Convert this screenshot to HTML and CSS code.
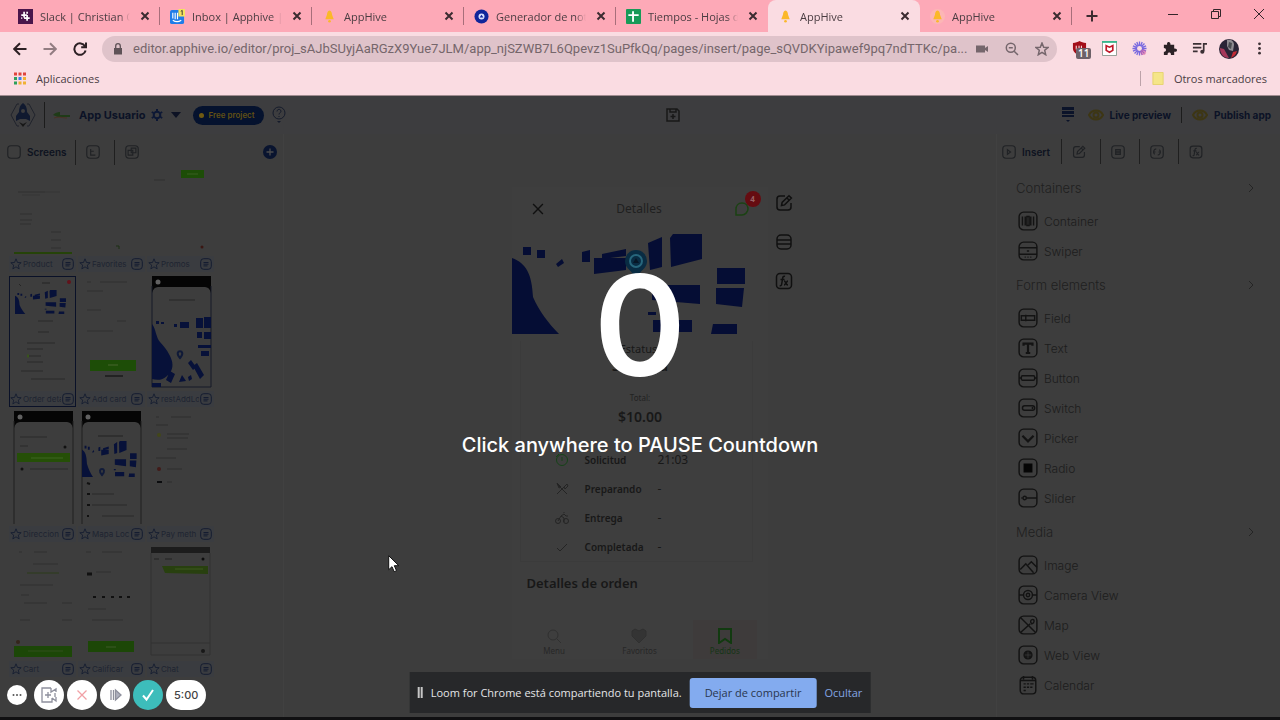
FILE: index.html
```html
<!DOCTYPE html>
<html lang="es">
<head>
  <meta charset="UTF-8">
  <title>AppHive</title>
  <link rel="stylesheet" href="styles.css">
</head>
<body>
  <!-- shared icons -->
  <svg class="sprite" aria-hidden="true">
    <symbol id="close" viewBox="0 0 10 10"><path d="M1.5 1.5l7 7M8.5 1.5l-7 7"/></symbol>
    <symbol id="star" viewBox="0 0 14 14"><path d="M7 1l1.7 4.2 4.3.3-3.300 2.800 1 4.400L7 10.300 3.300 12.700l1-4.400L1 5.500l4.300-.3z"/></symbol>
    <symbol id="menu" viewBox="0 0 12 12"><rect x=".7" y=".7" width="10.600" height="10.600" rx="3"/><path d="M3.500 4.500h5M3.500 6.200h5M3.500 7.900h4"/></symbol>
    <symbol id="chevron" viewBox="0 0 10 10"><path d="M3 1l4 4-4 4"/></symbol>
    <symbol id="bell" viewBox="0 0 16 16"><path d="M8 1.500c-2 0-2.500 2.500-2.700 4.500L3.500 11h9l-1.800-5C10.500 4 10 1.500 8 1.500z" fill="#fbb829" stroke="none"/><circle cx="8" cy="13" r="1.400" fill="#fbb829" stroke="none"/></symbol>
    <symbol id="edit" viewBox="0 0 18 18"><path d="M10 2H5a3 3 0 0 0-3 3v8a3 3 0 0 0 3 3h8a3 3 0 0 0 3-3V9M6.500 11.500l.6-3L14 1.800l2.400 2.300-6.800 6.800zM12 4l2.200 2.200"/></symbol>
    <symbol id="fx" viewBox="0 0 18 18"><rect x="1.500" y="1.500" width="15" height="15" rx="3.500"/><path d="M10 4.500c-1.500-.8-2.200.5-2.400 2L6.700 12c-.2 1.400-.8 2-2 1.500M5.500 7.500h4M9 9c2 0 1.500 4 4 4M13 9c-1.500 0-2.500 4-4 4"/></symbol>
    <symbol id="eye" viewBox="0 0 16 12"><path d="M1 6c3-6 11-6 14 0-3 6-11 6-14 0z"/><circle cx="8" cy="6" r="2.500"/></symbol>
    <symbol id="box" viewBox="0 0 18 18"><rect x="1" y="1" width="16" height="16" rx="4"/></symbol>
    <symbol id="city" viewBox="0 0 256 100" preserveAspectRatio="none">
      <path d="M0 24c14 5 20 16 21 39 6 14 16 27 26 37H0zM11 13h8v8h-8zM25 16h8v8h-8zM44 30l6-5 2 4-6 4zM70 18l8-2v12h-8zM82 24h32v12l-32 4zM90 20l24-5v7l-24 3zM136 9l14-6v30l-12 3zM158 4l3-4h29v25l-31 8zM205 34h28v16h-28zM204 54h28l-2 19-26-3zM140 51h48v19l-48-4zM141 86h39v12h-39zM201 90h24v10h-26zM136 78h8v3h-8z"/>
    </symbol>
  </svg>

  <header class="browser">
    <div class="tabs">
      <div class="tab">
        <svg class="favicon" viewBox="0 0 16 16"><rect width="16" height="16" fill="#4a154b"/><path d="M6.500 3v6M9.700 6.500v6M3.500 6.500h6M6.500 9.700h6M9.700 3v2M3.500 9.700h1" stroke="#fff" stroke-width="1.800"/></svg>
        <span class="tab-title">Slack | Christian Co</span>
        <button class="tab-close" aria-label="Cerrar"><svg><use href="#close"/></svg></button>
      </div>
      <div class="tab">
        <svg class="favicon" viewBox="0 0 16 16"><rect y="1" width="15" height="15" rx="2" fill="#1f7ce8"/><path d="M3 4v6M5.500 4v7M8 4v7M3 12c3 2 6 2 9 0" stroke="#fff" stroke-width="1.200" fill="none"/><rect x="9" width="7" height="8" fill="#f5e35f"/><path d="M11.500 2.500l1.500-1v5" stroke="#333" fill="none"/></svg>
        <span class="tab-title">Inbox | Apphive | In</span>
        <button class="tab-close" aria-label="Cerrar"><svg><use href="#close"/></svg></button>
      </div>
      <div class="tab">
        <svg class="favicon"><use href="#bell"/></svg>
        <span class="tab-title">AppHive</span>
        <button class="tab-close" aria-label="Cerrar"><svg><use href="#close"/></svg></button>
      </div>
      <div class="tab">
        <svg class="favicon" viewBox="0 0 16 16"><circle cx="8" cy="8" r="7.500" fill="#10259a"/><circle cx="8" cy="8" r="3.200" fill="#d9e2ff"/><path d="M6 9l2-3 2 3z" fill="#10259a"/></svg>
        <span class="tab-title">Generador de not</span>
        <button class="tab-close" aria-label="Cerrar"><svg><use href="#close"/></svg></button>
      </div>
      <div class="tab before-active">
        <svg class="favicon" viewBox="0 0 16 16"><rect width="16" height="16" rx="1" fill="#189a58"/><path d="M7.500 2.500v11M2.500 6.500h11" stroke="#fff" stroke-width="2"/></svg>
        <span class="tab-title">Tiempos - Hojas d</span>
        <button class="tab-close" aria-label="Cerrar"><svg><use href="#close"/></svg></button>
      </div>
      <div class="tab active">
        <svg class="favicon"><use href="#bell"/></svg>
        <span class="tab-title">AppHive</span>
        <button class="tab-close" aria-label="Cerrar"><svg><use href="#close"/></svg></button>
      </div>
      <div class="tab">
        <svg class="favicon glow"><use href="#bell"/></svg>
        <span class="tab-title">AppHive</span>
        <button class="tab-close" aria-label="Cerrar"><svg><use href="#close"/></svg></button>
      </div>
      <button class="new-tab" aria-label="Nueva pestaña"><svg viewBox="0 0 12 12"><path d="M6 .5v11M.5 6h11"/></svg></button>
      <div class="window-buttons">
        <button aria-label="Minimizar"><svg viewBox="0 0 10 10"><path d="M0 5.500h10"/></svg></button>
        <button aria-label="Restaurar"><svg viewBox="0 0 10 10"><path d="M.5 2.500h7v7h-7zM2.500 2.500v-2h7v7h-2"/></svg></button>
        <button aria-label="Cerrar ventana"><svg viewBox="0 0 10 10"><path d="M0 0l10 10M10 0L0 10"/></svg></button>
      </div>
    </div>

    <div class="toolbar">
      <div class="nav-buttons">
        <button aria-label="Atrás"><svg viewBox="0 0 14 14"><path d="M13.500 7H1.500M7 1.200L1.200 7 7 12.800"/></svg></button>
        <button class="disabled" aria-label="Adelante"><svg viewBox="0 0 14 14"><path d="M.5 7h12M7 1.200L12.800 7 7 12.800"/></svg></button>
        <button aria-label="Recargar"><svg viewBox="0 0 14 14"><path d="M12 4.200A5.700 5.700 0 1 0 12.600 8.500M13 .5v4.800H8.200"/></svg></button>
      </div>
      <div class="address">
        <svg class="lock" viewBox="0 0 10 12"><path d="M1 5h8v6.500H1z" fill="#5e5257"/><path d="M2.700 5V3a2.300 2.300 0 0 1 4.600 0v2" fill="none" stroke="#5e5257" stroke-width="1.300"/></svg>
        <input class="url" type="text" aria-label="Dirección" value="editor.apphive.io/editor/proj_sAJbSUyjAaRGzX9Yue7JLM/app_njSZWB7L6Qpevz1SuPfkQq/pages/insert/page_sQVDKYipawef9pq7ndTTKc/pa...">
        <svg class="small" viewBox="0 0 14 14"><path d="M1 3.500h9v7H1zM10 6l3-2v6l-3-2z" fill="#75666c" stroke="none"/></svg>
        <svg class="small" viewBox="0 0 14 14"><circle cx="5.800" cy="5.800" r="4.500"/><path d="M9.200 9.200L13 13M3.800 5.800h4"/></svg>
        <svg class="small" viewBox="0 0 14 14"><use href="#star"/></svg>
      </div>
      <div class="extensions">
        <button class="ublock" aria-label="uBlock">
          <svg viewBox="0 0 14 16"><path d="M0 2c3 0 5-1 7-2 2 1 4 2 7 2v6c0 4-4 6-7 8-3-2-7-4-7-8z" fill="#a30d18"/><path d="M3.500 5v4h3V5M9 5v4h2" stroke="#fff" fill="none"/></svg>
          <span class="count">11</span>
        </button>
        <button aria-label="McAfee"><svg viewBox="0 0 16 16"><path d="M.5.5h15v15H.5z" fill="#fff" stroke="#8d9a91"/><path d="M0 0h16v2H0z" fill="#38b58c"/><path d="M4.500 5l3.500 1.600L11.500 5v5L8 12 4.500 10z" fill="none" stroke="#c01829" stroke-width="1.800"/></svg></button>
        <button aria-label="Loom"><svg viewBox="0 0 16 16"><path d="M8 .5v15M.5 8h15M2.700 2.700l10.600 10.600M13.300 2.700L2.700 13.300M5.100 1l5.800 14M1 5.100l14 5.800M1 10.900l14-5.800M5.100 15L10.900 1" stroke="#7768df" stroke-width="1.400"/><circle cx="8" cy="8" r="2.600" fill="#fadce2"/><circle cx="12" cy="12" r="3" fill="#df5c97" opacity=".5"/></svg></button>
        <button aria-label="Extensiones"><svg viewBox="0 0 16 16"><path d="M2 4h3.500c-1-4 4-4 3.500 0h4v4c4-.5 4 4 0 3.500V15H9.500c.5-3.500-4-3.500-3.500 0H2v-3.500c3 0 3-4 0-4z" fill="#2b2226"/></svg></button>
        <button aria-label="Multimedia"><svg viewBox="0 0 16 16"><path d="M1 3h9M1 7h9M1 11h5" stroke="#3b3034" stroke-width="1.800"/><path d="M12.500 11V3H16" stroke="#3b3034" stroke-width="1.800" fill="none"/><circle cx="11" cy="11.500" r="2.200" fill="#3b3034"/></svg></button>
        <button class="avatar" aria-label="Perfil"><svg viewBox="0 0 20 20"><circle cx="10" cy="10" r="10" fill="#2a2436"/><path d="M8 1c4-1 7 1 7 5l-1 6-4-1-2-4z" fill="#8d8a90"/><path d="M10 3l3 1-1 6-3-2z" fill="#484b50"/><path d="M1 9l4 1 5 9c-6 0-9-5-9-10z" fill="#a5385a"/><path d="M14 13l4-1c-1 4-4 6-6 7z" fill="#c22b35"/></svg></button>
        <button aria-label="Menú"><svg viewBox="0 0 16 16" fill="#3b3034"><circle cx="8" cy="3" r="1.500"/><circle cx="8" cy="8" r="1.500"/><circle cx="8" cy="13" r="1.500"/></svg></button>
      </div>
    </div>

    <div class="bookmarks">
      <a href="#"><svg viewBox="0 0 12 12"><path d="M0 0h3v3H0zM4.500 0h3v3h-3zM9 0h3v3H9z" fill="#e0433b"/><path d="M0 4.500h3v3H0z" fill="#2da05a"/><path d="M4.500 4.500h3v3h-3z" fill="#3880e8"/><path d="M9 4.500h3v3H9zM4.500 9h3v3h-3zM9 9h3v3H9z" fill="#f0b132"/><path d="M0 9h3v3H0z" fill="#2da05a"/></svg>Aplicaciones</a>
      <a class="other" href="#"><svg viewBox="0 0 12 14"><path d="M.5.5h11v13H.5z" fill="#f5e588" stroke="#e5d36c"/></svg>Otros marcadores</a>
    </div>
  </header>

  <div class="app">
    <div class="app-bar">
      <div class="project">
        <svg class="logo" viewBox="0 0 26 26"><path d="M9 2H7L1 13l6 11h2M17 2h2l6 11-6 11h-2" fill="none" stroke="#20232c" stroke-width="1"/><path d="M13 1c3 2 4 5 4 9l3 4v5l-4-2h-6l-4 2v-5l3-4c0-4 1-7 4-9z" fill="#10192f"/><circle cx="13" cy="9" r="2" fill="#3d3d3e"/><path d="M9 20l4 2 4-2-4 5z" fill="#171717"/></svg>
        <span class="divider"></span>
        <svg class="brand" viewBox="0 0 18 10"><path d="M0 5c3-3 6-3 7-3v3h10v2H5z" fill="#1f3b18"/><path d="M1 8c6-2 8 0 13 0" stroke="#4a3122" fill="none"/></svg>
        <strong class="project-name">App Usuario</strong>
        <svg class="gear" viewBox="0 0 12 12"><circle cx="6" cy="6" r="3.300" fill="none" stroke="#0d1835" stroke-width="2"/><path d="M6 0v2M6 10v2M.8 3l1.800 1M9.400 8l1.800 1M.8 9l1.800-1M9.400 4l1.800-1" stroke="#0d1835" stroke-width="2"/></svg>
        <svg class="caret" viewBox="0 0 10 6"><path d="M0 0h10L5 6z" fill="#0d1224"/></svg>
        <span class="plan"><i></i>Free project</span>
        <svg class="help" viewBox="0 0 14 18"><circle cx="7" cy="7" r="6" fill="none" stroke="#151b2b"/><path d="M5 5.500c0-3 4-2.500 4-.3C9 7 7 6.500 7 8.500M7 10v1" fill="none" stroke="#151b2b"/><path d="M5 15h4l-2 2z" fill="#151b2b"/></svg>
      </div>
      <button class="save" aria-label="Guardar"><svg viewBox="0 0 14 14"><path d="M1 1h10l2 2v10H1zM4 1v3h6V1M7 6v5M4.500 8.500h5"/></svg></button>
      <div class="publish">
        <svg class="layers" viewBox="0 0 14 18"><path d="M1 1h12v3H1zM1 5h12v3H1zM1 9h12v2H1z" fill="#0b1329"/><path d="M5 14h4l-2 2z" fill="#0b1329"/></svg>
        <button class="bar-button"><svg><use href="#eye"/></svg>Live preview</button>
        <span class="divider short"></span>
        <button class="bar-button"><svg><use href="#eye"/></svg>Publish app</button>
      </div>
    </div>

    <div class="workspace">
      <aside class="screens-panel">
        <div class="panel-tabs">
          <button class="panel-tab current"><svg><use href="#box"/></svg>Screens</button>
          <button class="panel-tab" aria-label="Árbol"><svg viewBox="0 0 18 18"><use href="#box"/><path d="M6 5v8h6M6 8h4"/></svg></button>
          <button class="panel-tab" aria-label="Componentes"><svg viewBox="0 0 18 18"><use href="#box"/><path d="M4 7h6v6H4zM8 4h6v6H8z"/></svg></button>
          <button class="add" aria-label="Agregar"><svg viewBox="0 0 14 14"><circle cx="7" cy="7" r="7" fill="#09142f"/><path d="M7 3.500v7M3.500 7h7" stroke="#4b4b4c" stroke-width="1.300"/></svg></button>
        </div>
        <div class="screens">
          <div class="screen">
            <svg class="thumb" viewBox="0 0 67 85"><path d="M9 22h27M11 44h12M11 50h12M11 54h11M42 62h10M42 70h10M42 78h10" stroke="#303030"/><path d="M5 83h58" stroke="#254309" stroke-width="2"/><path d="M36 22h15M13 25h18" stroke="#363636"/></svg>
            <div class="screen-name"><svg><use href="#star"/></svg><span>Product</span><svg><use href="#menu"/></svg></div>
          </div>
          <div class="screen">
            <svg class="thumb" viewBox="0 0 67 85"><path d="M38 76h3v3" stroke="#1c3015" fill="none"/></svg>
            <div class="screen-name"><svg><use href="#star"/></svg><span>Favorites</span><svg><use href="#menu"/></svg></div>
          </div>
          <div class="screen">
            <svg class="thumb" viewBox="0 0 67 85"><path d="M34 0h23v8H34z" fill="#1d4d07"/><path d="M40 4h11" stroke="#3a6123"/><path d="M7 10h11" stroke="#303030"/><circle cx="55" cy="77" r="1.500" fill="#3a1612"/></svg>
            <div class="screen-name"><svg><use href="#star"/></svg><span>Promos</span><svg><use href="#menu"/></svg></div>
          </div>
          <div class="screen selected">
            <svg class="thumb" viewBox="0 0 67 114"><path d="M10 8l2 2M33 7h8" stroke="#252525"/><circle cx="60" cy="6" r="2" fill="#63121b"/><svg x="6" y="14" width="56" height="24" fill="#071139"><use href="#city"/></svg><path d="M29 45h15M29 56h11M18 67h28M18 73h16M18 80h14M18 86h16M12 95h22M22 103h34" stroke="#2b2b2b"/><path d="M18 80h2" stroke="#39541d" stroke-width="3"/></svg>
            <div class="screen-name"><svg><use href="#star"/></svg><span>Order deta</span><svg><use href="#menu"/></svg></div>
          </div>
          <div class="screen">
            <svg class="thumb" viewBox="0 0 67 114"><path d="M9 6h4M22 6h27M9 15h16M9 34h14M39 45h9M9 55h26" stroke="#313131"/><path d="M12 84h46v11H12z" fill="#1d4d07"/><path d="M30 89h10" stroke="#48662f"/><path d="M27 100h18" stroke="#222" stroke-width="2"/></svg>
            <div class="screen-name"><svg><use href="#star"/></svg><span>Add card</span><svg><use href="#menu"/></svg></div>
          </div>
          <div class="screen">
            <svg class="thumb" viewBox="0 0 67 114"><path d="M5 0h59v17c-1-4-3-6-6-6H11c-3 0-5 2-6 6z" fill="#050505"/><path d="M5 10v101h59V10" fill="none" stroke="#171b29"/><circle cx="11" cy="6" r="2.500" fill="#616161"/><path d="M22 24h26" stroke="#272727"/><path d="M5 48c4 5 4 14 8 18 11 12 18 25 7 34-5 5-11 4-15 3zM9 45h3v3H9zM14 46h3v2h-3zM27 48h3v3h-3zM33 46h9v6h-9zM49 42h7v10h-7zM57 41h7v11h-7zM50 56h5v6h-5zM57 56h7v7h-7zM51 69h13v3H51zM54 75h8v5h-8zM5 107h9v4H5zM23 95l5 3-4 9-5-3zM32 106l3-7 4 6zM41 87l3-3 5 7-3 3zM46 90l4-3 7 12-4 4zM41 101l3-2 1 4-3 2z" fill="#071139"/><path d="M33 82c-8-9 8-9 0 0z" fill="none" stroke="#101a38" stroke-width="2"/></svg>
            <div class="screen-name"><svg><use href="#star"/></svg><span>restAddLo</span><svg><use href="#menu"/></svg></div>
          </div>
          <div class="screen">
            <svg class="thumb" viewBox="0 0 67 114"><path d="M5 0h59v17c-1-4-3-6-6-6H11c-3 0-5 2-6 6z" fill="#050505"/><path d="M5 10v103M64 10v103" fill="none" stroke="#202020"/><circle cx="11" cy="6" r="2.500" fill="#616161"/><path d="M11 26h27M11 35h8M21 58h38" stroke="#2a2a2a"/><path d="M8 42h53v9H8z" fill="#254f07"/><path d="M22 47h32" stroke="#3f6622"/><circle cx="13" cy="58" r="1.500" fill="#111"/><circle cx="56" cy="36" r="1.500" fill="#111"/></svg>
            <div class="screen-name"><svg><use href="#star"/></svg><span>Direccion</span><svg><use href="#menu"/></svg></div>
          </div>
          <div class="screen">
            <svg class="thumb" viewBox="0 0 67 114"><path d="M4 0h59v17c-1-4-3-6-6-6H10c-3 0-5 2-6 6z" fill="#050505"/><path d="M4 10v103M63 10v103" fill="none" stroke="#202020"/><circle cx="10" cy="6" r="2.500" fill="#616161"/><path d="M20 25h25" stroke="#222"/><svg x="4" y="30" width="60" height="36" fill="#071139"><use href="#city"/></svg><path d="M24 64c-7-8 7-8 0 0z" fill="none" stroke="#111b39" stroke-width="2"/><path d="M14 83h22M14 94h35M24 105h32" stroke="#2b2b2b"/><path d="M9 72l3 1M9 83h3M9 94h3M9 105h2" stroke="#111" stroke-width="2"/></svg>
            <div class="screen-name"><svg><use href="#star"/></svg><span>Mapa Loc</span><svg><use href="#menu"/></svg></div>
          </div>
          <div class="screen">
            <svg class="thumb" viewBox="0 0 67 114"><path d="M9 6h3M24 6h20M9 14h12M20 23h22M20 27h21M20 38h20M9 47h20M20 58h15M20 71h5" stroke="#2e2e2e"/><circle cx="12" cy="24" r="2" fill="#434719"/><circle cx="12" cy="58" r="2" fill="#421a18"/><path d="M10 71h5" stroke="#0b0c0e" stroke-width="2"/></svg>
            <div class="screen-name"><svg><use href="#star"/></svg><span>Pay meth</span><svg><use href="#menu"/></svg></div>
          </div>
          <div class="screen">
            <svg class="thumb" viewBox="0 0 67 114"><path d="M10 6h3M25 6h13M24 18h25M11 39h33M12 49h8M15 57h23M53 57h10M11 74h10M53 74h10" stroke="#303030"/><path d="M18 27h32" stroke="#2c3d1a"/><path d="M5 100h58v11H5z" fill="#1c4707"/><path d="M19 105h35" stroke="#31501c"/><circle cx="9" cy="96" r="2" fill="#35251b"/></svg>
            <div class="screen-name"><svg><use href="#star"/></svg><span>Cart</span><svg><use href="#menu"/></svg></div>
          </div>
          <div class="screen">
            <svg class="thumb" viewBox="0 0 67 114"><path d="M8 6h5M24 6h20M18 26h15M10 63h18M14 74h31" stroke="#303030"/><path d="M9 28h5" stroke="#111" stroke-width="3"/><path d="M15 51h3M24 51h3M33 51h3M41 51h3M49 51h3" stroke="#101010" stroke-width="2"/><path d="M10 95h46v11H10z" fill="#1c4707"/><path d="M28 101h10" stroke="#3d5b28"/></svg>
            <div class="screen-name"><svg><use href="#star"/></svg><span>Calificar</span><svg><use href="#menu"/></svg></div>
          </div>
          <div class="screen">
            <svg class="thumb" viewBox="0 0 67 114"><path d="M4 1h59v6H4z" fill="#1c1c1c"/><path d="M4 7v102h59V7M4 97h59" fill="none" stroke="#333"/><path d="M7 13h5M18 13h7" stroke="#222"/><path d="M15 20h46v8l-43-1z" fill="#28400f"/><path d="M28 23h28" stroke="#3c5821"/><circle cx="56" cy="13" r="1.500" fill="#0c0c0c"/><circle cx="56" cy="105" r="2" fill="#181818"/></svg>
            <div class="screen-name"><svg><use href="#star"/></svg><span>Chat</span><svg><use href="#menu"/></svg></div>
          </div>
        </div>
      </aside>

      <main class="canvas">
        <div class="phone">
          <div class="phone-header">
            <svg class="phone-close"><use href="#close"/></svg>
            <span>Detalles</span>
            <div class="chat">
              <svg viewBox="0 0 16 16"><path d="M2 14V8c0-3 2-6 6-6s6 3 6 6-3 6-6 6z" fill="none" stroke="#1b4213" stroke-width="1.500"/></svg>
              <b>4</b>
            </div>
          </div>
          <svg class="map" viewBox="0 0 256 100"><use href="#city" fill="#050d34"/><circle cx="124" cy="27" r="11" fill="#092c43"/><path d="M117 35l7 9 7-9z" fill="#092c43"/><circle cx="124" cy="27" r="6" fill="none" stroke="#27667c" stroke-width="2"/><path d="M121 29l3-5 3 5z" fill="#071626"/></svg>
          <div class="order">
            <p class="order-label">Estatus:</p>
            <p class="order-status">Solicitud</p>
            <p class="order-total-label">Total:</p>
            <p class="order-total">$10.00</p>
            <ul class="steps">
              <li><svg viewBox="0 0 14 14"><circle cx="7" cy="7" r="5.500" stroke="#164218"/><path d="M7 4v4M4 1L1 4" stroke="#164218"/></svg><b>Solicitud</b><span class="time">21:03</span></li>
              <li><svg viewBox="0 0 14 14"><path d="M2 2l10 10M2 12l7-7M9 5l3-3 1 2-3 3zM2 1l4 4-2 1z"/></svg><b>Preparando</b><span>-</span></li>
              <li><svg viewBox="0 0 14 14"><circle cx="3" cy="10" r="2.500"/><circle cx="11" cy="10" r="2.500"/><path d="M3 10l3-5 3 2v4M6 5l3-2 2 2h2M9 1v1"/></svg><b>Entrega</b><span>-</span></li>
              <li><svg viewBox="0 0 14 14"><path d="M2 8l3 3 7-7"/></svg><b>Completada</b><span>-</span></li>
            </ul>
          </div>
          <h2 class="order-title">Detalles de orden</h2>
          <nav class="phone-nav">
            <a href="#"><svg viewBox="0 0 16 16"><circle cx="7" cy="7" r="5"/><path d="M11 11l4 4"/></svg>Menu</a>
            <a href="#"><svg viewBox="0 0 16 16"><path d="M8 15L1 8V3l3-2 4 2 4-2 3 2v5z" fill="#343434"/></svg>Favoritos</a>
            <a href="#"><span class="on"><svg viewBox="0 0 16 16"><path d="M2 1h12v14l-6-4-6 4z"/></svg>Pedidos</span></a>
          </nav>
        </div>
        <div class="phone-tools">
          <button aria-label="Editar"><svg><use href="#edit"/></svg></button>
          <button aria-label="Datos"><svg viewBox="0 0 18 18"><rect x="2" y="2" width="14" height="14" rx="4"/><path d="M2 7h14M2 11h14"/></svg></button>
          <button aria-label="Funciones"><svg><use href="#fx"/></svg></button>
        </div>
      </main>

      <aside class="insert-panel">
        <div class="panel-tabs">
          <button class="panel-tab current"><svg viewBox="0 0 18 18"><use href="#box"/><path d="M7 6l4 3-4 3z"/></svg>Insert</button>
          <button class="panel-tab" aria-label="Editar"><svg><use href="#edit"/></svg></button>
          <button class="panel-tab" aria-label="Estilo"><svg viewBox="0 0 18 18"><use href="#box"/><path d="M6 6h6v6H6zM6 8h6M6 10h6"/></svg></button>
          <button class="panel-tab" aria-label="Eventos"><svg viewBox="0 0 18 18"><use href="#box"/><path d="M8 5a4 4 0 0 0-2 7M10 13a4 4 0 0 0 2-7M5 9h2M11 9h3"/></svg></button>
          <button class="panel-tab" aria-label="Funciones"><svg><use href="#fx"/></svg></button>
        </div>
        <section>
          <h3>Containers<svg><use href="#chevron"/></svg></h3>
          <ul class="elements">
            <li><svg viewBox="0 0 18 18"><use href="#box"/><path d="M4 5v8M14 5v8M6.500 5v8M11.500 5v8M8 5h2v8H8z"/></svg>Container</li>
            <li><svg viewBox="0 0 18 18"><use href="#box"/><path d="M1 6h16M1 12h16M8 9h2M6 14.500h1M8.500 14.500h1M11 14.500h1"/></svg>Swiper</li>
          </ul>
        </section>
        <section>
          <h3>Form elements<svg><use href="#chevron"/></svg></h3>
          <ul class="elements">
            <li><svg viewBox="0 0 18 18"><use href="#box"/><path d="M3 7h12v4H3zM7 6v6"/></svg>Field</li>
            <li><svg viewBox="0 0 18 18"><use href="#box"/><path d="M5 7V5h8v2M9 5v8M7 13.500h4" stroke-width="2"/></svg>Text</li>
            <li><svg viewBox="0 0 18 18"><use href="#box"/><rect x="3" y="7" width="12" height="4" rx="1"/><path d="M1 9h2M15 9h2"/></svg>Button</li>
            <li><svg viewBox="0 0 18 18"><use href="#box"/><rect x="4" y="7" width="11" height="4" rx="2"/><path d="M13 8v2"/></svg>Switch</li>
            <li><svg viewBox="0 0 18 18"><use href="#box"/><path d="M4 7l5 5 5-5" stroke-width="2"/></svg>Picker</li>
            <li><svg viewBox="0 0 18 18"><use href="#box"/><path d="M6 6h6v6H6z" fill="#060606" stroke="#060606" stroke-width="2"/></svg>Radio</li>
            <li><svg viewBox="0 0 18 18"><use href="#box"/><circle cx="6" cy="9" r="1.500"/><path d="M7.500 9H17M3 9h1"/></svg>Slider</li>
          </ul>
        </section>
        <section>
          <h3>Media<svg><use href="#chevron"/></svg></h3>
          <ul class="elements">
            <li><svg viewBox="0 0 18 18"><use href="#box"/><path d="M2 13l5-5 7 8M9 9l3-3 5 5"/></svg>Image</li>
            <li><svg viewBox="0 0 18 18"><use href="#box"/><circle cx="9" cy="9" r="4"/><circle cx="9" cy="9" r="1.500"/><path d="M1 9h4M13 9h4"/></svg>Camera View</li>
            <li><svg viewBox="0 0 18 18"><use href="#box"/><path d="M2 2l14 14M2 16l9-8M12.500 8c-4-4 4-6 1.500-1z"/></svg>Map</li>
            <li><svg viewBox="0 0 18 18"><use href="#box"/><circle cx="9" cy="9" r="3.500" fill="#171717"/><path d="M6 9h6M9 6v6" stroke="#444" stroke-width=".5"/></svg>Web View</li>
            <li><svg viewBox="0 0 18 18"><rect x="2" y="2" width="14" height="15" rx="3"/><path d="M2 5h14M5 1v3M13 1v3M5 8h2M8 8h2M11 8h3M5 11h2M8 11h2M11 11h2M5 14h2"/></svg>Calendar</li>
          </ul>
        </section>
      </aside>
    </div>
  </div>

  <div class="countdown">
    <span class="number">0</span>
    <span class="hint">Click anywhere to PAUSE Countdown</span>
  </div>

  <div class="loom">
    <button class="more" aria-label="Más"><svg viewBox="0 0 10 10" fill="#555"><circle cx="1.500" cy="5" r="1"/><circle cx="5" cy="5" r="1"/><circle cx="8.500" cy="5" r="1"/></svg></button>
    <button aria-label="Cámara"><svg viewBox="0 0 16 16"><path d="M10 1H1v14h10v-4M10 1v4l5-3v3M11 11l4 3v-4M4 8h6M7 5v6M14 6v4"/></svg></button>
    <button aria-label="Cancelar"><svg viewBox="0 0 16 16"><path d="M3.500 3.500l9 9M12.500 3.500l-9 9" stroke="#f1a0a5"/></svg></button>
    <button aria-label="Iniciar"><svg viewBox="0 0 16 16"><path d="M4 3v10M6.500 3v10"/><path d="M8.500 3l5.500 5-5.500 5z" fill="#aeb0be"/></svg></button>
    <button class="done" aria-label="Listo"><svg viewBox="0 0 16 16"><path d="M3 8.500l3.500 4L13 3" stroke="#fff" stroke-width="2"/></svg></button>
    <span class="timer">5:00</span>
  </div>

  <div class="share">
    <span class="grip"></span>
    <span>Loom for Chrome está compartiendo tu pantalla.</span>
    <button class="stop">Dejar de compartir</button>
    <button class="hide">Ocultar</button>
  </div>

  <svg class="cursor" viewBox="0 0 12 18"><path d="M.7.7v14l3.300-3 2.200 5 2.300-1-2.200-5h4.500z" fill="#fff" stroke="#111"/></svg>
</body>
</html>
```

FILE: styles.css
```css
* {
  box-sizing: border-box;
}

body {
  margin: 0;
  height: 100vh;
  display: flex;
  flex-direction: column;
  position: relative;
  overflow: hidden;
  background: #3d3d3d;
  font-family: "Open Sans", "Noto Sans", sans-serif;
  font-size: 12px;
}

button {
  padding: 0;
  border: none;
  background: none;
  font: inherit;
  color: inherit;
  display: flex;
  align-items: center;
  justify-content: center;
}

a {
  color: inherit;
  text-decoration: none;
}

ul,
p,
h2,
h3 {
  margin: 0;
  padding: 0;
  list-style: none;
}

svg {
  flex: none;
}

.sprite {
  position: absolute;
  width: 0;
  height: 0;
}

/* browser */
.browser {
  flex: none;
  background: #fadce2;
  color: #4a3d42;
  border-bottom: 1px solid #a08c90;
}

.tabs {
  display: flex;
  height: 32px;
  padding-left: 8px;
  background: #fda9b7;
}

.tab {
  flex: 0 1 152px;
  min-width: 0;
  display: flex;
  align-items: center;
  gap: 7px;
  padding: 0 7px 0 10px;
  background: linear-gradient(#a86e7a, #a86e7a) no-repeat right 7px / 1px 18px;
}

.tab.before-active {
  background: none;
}

.tab.active {
  background: #fadce2;
  border-radius: 8px 8px 0 0;
}

.favicon {
  width: 15px;
  height: 15px;
}

.glow {
  border-radius: 50%;
  background: #fcb6b5;
}

.tab-title {
  flex: 1;
  overflow: hidden;
  white-space: nowrap;
  font-size: 11px;
  -webkit-mask-image: linear-gradient(90deg, #000 88%, transparent);
}

.tab-close {
  width: 16px;
  height: 16px;
}

.tab-close svg {
  width: 10px;
  height: 10px;
  stroke: #3b2b30;
  stroke-width: 2;
}

.new-tab {
  width: 40px;
}

.new-tab svg {
  width: 12px;
  height: 12px;
  stroke: #3b2b30;
  stroke-width: 2;
}

.window-buttons {
  display: flex;
  height: 27px;
  margin-left: auto;
}

.window-buttons button {
  width: 43px;
}

.window-buttons svg {
  width: 10px;
  height: 10px;
  fill: none;
  stroke: #33262a;
}

.toolbar {
  display: flex;
  align-items: center;
  height: 33px;
  padding: 0 11px 0 5px;
}

.nav-buttons {
  display: flex;
  width: 97px;
}

.nav-buttons button {
  width: 30px;
}

.nav-buttons svg {
  width: 14px;
  height: 14px;
  fill: none;
  stroke: #2c2024;
  stroke-width: 2;
}

.nav-buttons .disabled {
  opacity: 0.5;
}

.address {
  flex: 1;
  display: flex;
  align-items: center;
  gap: 16px;
  height: 26px;
  padding: 0 8px 0 11px;
  border-radius: 13px;
  background: #dfc3ca;
}

.lock {
  width: 10px;
  height: 12px;
  margin-right: -6px;
}

.url {
  flex: 1;
  min-width: 0;
  margin-right: -12px;
  padding: 0;
  border: none;
  outline: none;
  background: none;
  color: #75666b;
  font-family: Roboto, "Open Sans", sans-serif;
  font-size: 13px;
}

.small {
  width: 14px;
  height: 14px;
  fill: none;
  stroke: #75666c;
  stroke-width: 1.5;
}

.extensions {
  display: flex;
  align-items: center;
  gap: 10px;
  padding-left: 12px;
}

.extensions button {
  width: 20px;
  height: 20px;
}

.extensions svg {
  width: 15px;
  height: 15px;
}

.extensions .avatar svg {
  width: 20px;
  height: 20px;
}

.ublock {
  position: relative;
}

.count {
  position: absolute;
  left: 7px;
  top: 9px;
  padding: 0 2px;
  border-radius: 2px;
  background: #6d6168;
  color: #fff;
  font-size: 10px;
  line-height: 11px;
  font-weight: 600;
}

.bookmarks {
  display: flex;
  align-items: center;
  justify-content: space-between;
  height: 30px;
  padding: 0 13px 4px 14px;
  font-size: 11px;
}

.bookmarks a {
  display: flex;
  align-items: center;
  gap: 10px;
}

.bookmarks svg {
  width: 12px;
  height: 13px;
}

.bookmarks .other {
  padding-left: 11px;
  border-left: 1px solid #bca2a9;
}

/* editor */
.app {
  flex: 1;
  min-height: 0;
  display: flex;
  flex-direction: column;
  border-bottom: 3px solid #101012;
  color: #1c1c1c;
  font-family: Inter, "Open Sans", sans-serif;
}

.app-bar {
  display: flex;
  align-items: center;
  justify-content: space-between;
  height: 38px;
  padding: 0 9px 0 10px;
  background: #3d3d3f;
  color: #0b1226;
}

.project,
.publish {
  display: flex;
  align-items: center;
  gap: 8px;
}

.logo {
  width: 26px;
  height: 26px;
}

.divider {
  width: 1px;
  height: 26px;
  background: #1c1c1c;
}

.divider.short {
  height: 16px;
  margin: 0 2px;
}

.brand {
  width: 18px;
  height: 10px;
}

.project-name {
  font-size: 11px;
}

.gear {
  width: 12px;
  height: 12px;
  margin-left: -2px;
}

.caret {
  width: 10px;
  height: 6px;
}

.plan {
  display: flex;
  align-items: center;
  gap: 4px;
  height: 19px;
  margin: 0 0 0 4px;
  padding: 0 9px 0 6px;
  border-radius: 10px;
  background: #05122e;
  color: #615014;
  font-size: 8px;
  font-weight: 600;
}

.plan i {
  width: 5px;
  height: 5px;
  border-radius: 50%;
  background: #705a12;
}

.help,
.layers {
  width: 14px;
  height: 18px;
}

.layers {
  margin-right: 5px;
}

.save svg {
  width: 14px;
  height: 14px;
  fill: none;
  stroke: #181818;
  stroke-width: 1.5;
}

.bar-button {
  gap: 6px;
  font-size: 10px;
  font-weight: 700;
}

.bar-button svg {
  width: 16px;
  height: 12px;
  fill: none;
  stroke: #3d3614;
  stroke-width: 2;
}

.workspace {
  flex: 1;
  min-height: 0;
  display: flex;
}

.screens-panel {
  width: 284px;
  display: flex;
  flex-direction: column;
  border-right: 1px solid #414141;
}

.panel-tabs {
  display: flex;
  align-items: center;
  height: 37px;
}

.panel-tab {
  width: 39px;
  height: 25px;
  padding-right: 4px;
  border-left: 1px solid #1f1f1f;
}

.panel-tab svg {
  width: 14px;
  height: 14px;
  fill: none;
  stroke: #202225;
  stroke-width: 1.5;
}

.panel-tab.current {
  width: auto;
  gap: 6px;
  padding-right: 8px;
  border-left: none;
  color: #0e1320;
  font-size: 10px;
  font-weight: 600;
}

.screens-panel .panel-tabs {
  height: 36px;
  padding: 0 6px 0 7px;
}

.screens-panel .add {
  margin-left: auto;
}

.add svg {
  width: 14px;
  height: 14px;
}

.screens {
  flex: 1;
  min-height: 0;
  overflow: hidden;
  display: grid;
  grid-template-columns: repeat(3, 67px);
  grid-auto-rows: max-content;
  gap: 4px 2px;
  padding-left: 9px;
}

.screen {
  display: flex;
  flex-direction: column;
}

.thumb {
  width: 100%;
  margin-bottom: 1px;
}

.screen.selected {
  outline: 1px solid #0a1128;
  outline-offset: -1px;
}

.screen-name {
  display: flex;
  align-items: center;
  gap: 1px;
  height: 16px;
  padding: 0 2px 0 1px;
  background: #3a3c40;
  color: #1e2431;
  font-size: 8px;
}

.screen-name span {
  flex: 1;
  overflow: hidden;
  white-space: nowrap;
}

.screen-name svg {
  width: 12px;
  height: 12px;
  fill: none;
  stroke: #141c30;
}

.canvas {
  flex: 1;
  display: flex;
  justify-content: center;
  padding-top: 53px;
}

.phone {
  width: 256px;
  margin-left: 24px;
  display: flex;
  flex-direction: column;
  align-self: flex-start;
  background: #3e3e3e;
  font-family: "Noto Sans", sans-serif;
  color: #181818;
}

.phone-header {
  display: flex;
  align-items: center;
  justify-content: space-between;
  height: 47px;
  padding: 0 18px 4px 19px;
  color: #202020;
  font-size: 12px;
}

.phone-close {
  width: 14px;
  height: 14px;
  stroke: #101010;
}

.chat {
  position: relative;
  height: 16px;
}

.chat svg {
  width: 16px;
  height: 16px;
}

.chat b {
  position: absolute;
  left: 11px;
  top: -10px;
  width: 16px;
  height: 16px;
  border-radius: 50%;
  background: #650c11;
  color: #986164;
  font-size: 8px;
  line-height: 16px;
  text-align: center;
}

.map {
  width: 100%;
  height: 100px;
}

.order {
  margin: 7px 15px 0 8px;
  border: 1px solid #3b3b3b;
  border-top: none;
}

.order p {
  margin-left: 8px;
  text-align: center;
}

.order-label {
  font-size: 11px;
  line-height: 16px;
}

.order-status {
  font-size: 13px;
  font-weight: 700;
  line-height: 18px;
}

.order-total-label {
  padding-top: 14px;
  color: #222;
  font-size: 8px;
  line-height: 18px;
}

.order-total {
  padding-bottom: 18px;
  font-size: 14px;
  font-weight: 600;
  line-height: 20px;
}

.steps li {
  display: flex;
  align-items: center;
  height: 29px;
  padding-left: 34px;
}

.steps svg {
  width: 14px;
  height: 14px;
  margin-right: 16px;
  fill: none;
  stroke: #242424;
}

.steps b {
  width: 73px;
  font-size: 10px;
  font-weight: 600;
}

.time {
  font-size: 12px;
}

.order-title {
  padding: 9px 15px 0;
  font-size: 13px;
  font-weight: 600;
  line-height: 24px;
}

.phone-nav {
  display: flex;
  margin-top: 25px;
  color: #272727;
  font-size: 8px;
}

.phone-nav a,
.on {
  display: flex;
  flex-direction: column;
  align-items: center;
  gap: 1px;
}

.phone-nav a {
  flex: 1 1 0;
  padding: 8px 0 3px;
}

.phone-nav svg {
  width: 16px;
  height: 16px;
  fill: none;
  stroke: #303030;
}

.phone-nav .on {
  margin: -8px 0 -3px;
  padding: 8px 17px 3px;
  background: #3e3b3b;
  color: #163516;
}

.phone-nav .on svg {
  stroke: #123a10;
  stroke-width: 2;
}

.phone-tools {
  display: flex;
  flex-direction: column;
  gap: 21px;
  padding: 7px 0 0 7px;
}

.phone-tools svg {
  width: 18px;
  height: 18px;
  fill: none;
  stroke: #101010;
  stroke-width: 1.5;
}

.insert-panel {
  width: 284px;
  overflow: hidden;
  border-left: 1px solid #414141;
}

.insert-panel .panel-tabs {
  height: 35px;
  padding-left: 5px;
}

.insert-panel .current {
  padding-right: 11px;
}

.insert-panel h3 {
  display: flex;
  align-items: center;
  justify-content: space-between;
  height: 37px;
  padding: 0 24px 0 19px;
  color: #202020;
  font-size: 13px;
  font-weight: 300;
}

.insert-panel h3 svg {
  width: 10px;
  height: 10px;
  fill: none;
  stroke: #242424;
}

.elements li {
  display: flex;
  align-items: center;
  gap: 6px;
  height: 30px;
  padding-left: 21px;
  font-size: 12px;
  font-weight: 300;
}

.elements svg {
  width: 20px;
  height: 20px;
  fill: none;
  stroke: #131313;
  stroke-width: 1.3;
}

/* recording overlay */
.countdown {
  position: absolute;
  inset: 0;
  display: flex;
  flex-direction: column;
  align-items: center;
  justify-content: center;
  color: #fff;
  font-family: Inter, "Open Sans", sans-serif;
}

.number {
  margin-bottom: 38px;
  font-size: 140px;
  font-weight: 600;
  line-height: 132px;
}

.hint {
  font-size: 20px;
  font-weight: 500;
  line-height: 32px;
}

.loom {
  position: absolute;
  left: 7px;
  bottom: 10px;
  display: flex;
  align-items: center;
  gap: 3px;
}

.loom button {
  width: 30px;
  height: 30px;
  border-radius: 50%;
  background: #fff;
}

.loom svg {
  width: 16px;
  height: 16px;
  fill: none;
  stroke: #8e909d;
  stroke-width: 1.3;
}

.loom .more {
  width: 20px;
  height: 20px;
  margin-right: 4px;
}

.loom .more svg {
  width: 10px;
  height: 10px;
  stroke: none;
  fill: #555;
}

.loom .done {
  background: #3dbdbb;
}

.timer {
  padding: 0 8px;
  border-radius: 15px;
  background: #fff;
  color: #444;
  font-family: Inter, sans-serif;
  font-size: 11px;
  font-weight: 500;
  line-height: 30px;
}

.share {
  position: absolute;
  left: 50%;
  bottom: 7px;
  transform: translateX(-50%);
  display: flex;
  align-items: center;
  gap: 8px;
  height: 41px;
  padding: 0 8px;
  background: #27282a;
  color: #e4e5e7;
  font-size: 11px;
  white-space: nowrap;
}

.grip {
  width: 5px;
  height: 11px;
  border: solid #c6c6c6;
  border-width: 0 2px;
}

.share .stop {
  height: 30px;
  padding: 0 15px;
  border-radius: 3px;
  background: #83abef;
  color: #29364e;
}

.share .hide {
  color: #83a5e2;
}

.cursor {
  position: absolute;
  left: 388px;
  top: 555px;
  width: 12px;
  height: 18px;
}
```
